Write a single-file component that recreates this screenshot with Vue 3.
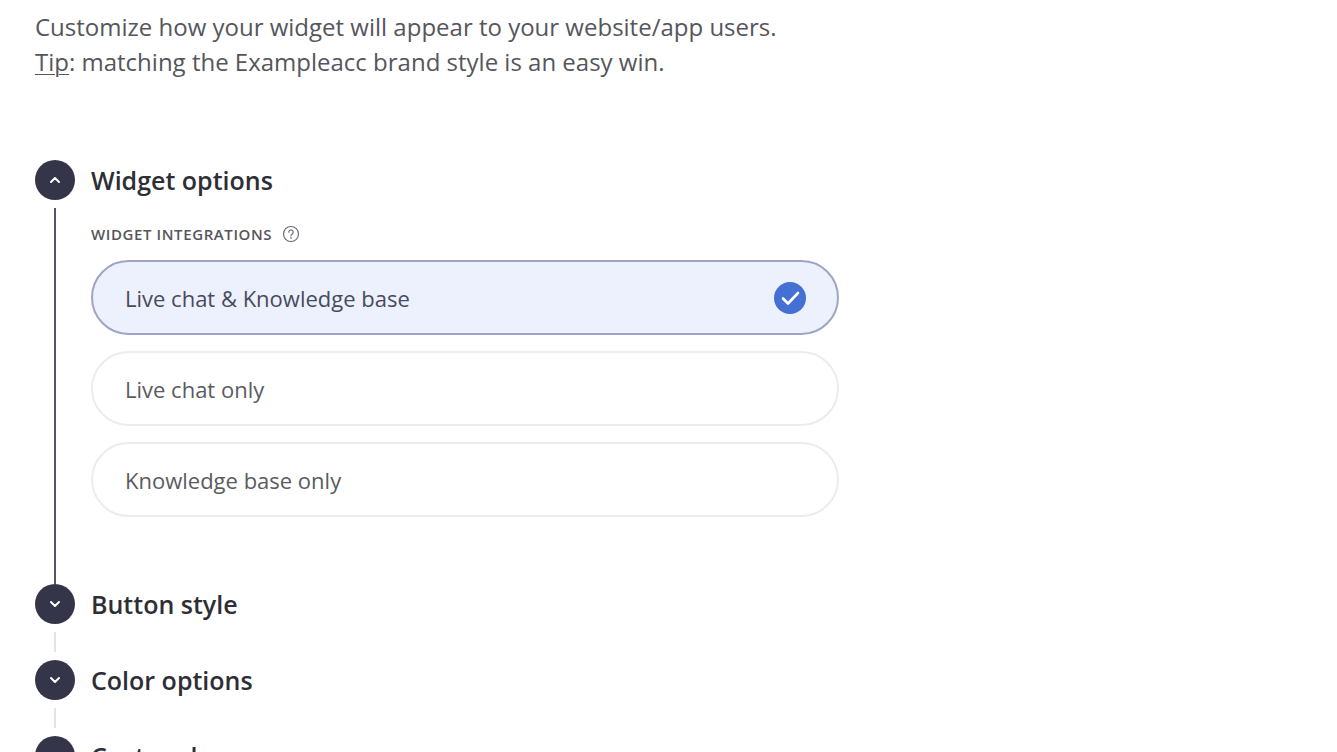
<script setup>
const options = [
  { label: 'Live chat & Knowledge base', selected: true },
  { label: 'Live chat only', selected: false },
  { label: 'Knowledge base only', selected: false },
]
const collapsed = ['Button style', 'Color options', 'Custom logo']
</script>

<template>
  <main class="page">
    <p class="intro">
      Customize how your widget will appear to your website/app users.<br />
      <span class="tip">Tip</span>: matching the Exampleacc brand style is an easy win.
    </p>

    <section class="steps">
      <div class="step-head">
        <span class="circle">
          <svg viewBox="0 0 16 16" class="chev"><path d="M4 10l4-4 4 4" /></svg>
        </span>
        <h2>Widget options</h2>
      </div>
      <div class="open-body">
        <div class="rail dark"></div>
        <div class="content">
          <div class="field-label">
            <span>Widget integrations</span>
            <svg viewBox="0 0 18 18" class="help">
              <circle cx="9" cy="9" r="7.5" />
              <path d="M6.8 7.2a2.2 2.2 0 1 1 3.4 1.8c-.8.5-1.2 1-1.2 1.8" />
              <path d="M9 12.4v.9" />
            </svg>
          </div>
          <div class="options">
            <div v-for="o in options" :key="o.label" class="option" :class="{ selected: o.selected }">
              <span>{{ o.label }}</span>
              <svg v-if="o.selected" viewBox="0 0 32 32" class="check">
                <circle cx="16" cy="16" r="16" />
                <path d="M9 16.5l5 5 10-10.5" />
              </svg>
            </div>
          </div>
        </div>
      </div>

      <template v-for="(name, i) in collapsed" :key="name">
        <div class="step-head">
          <span class="circle">
            <svg viewBox="0 0 16 16" class="chev"><path d="M4 6l4 4 4-4" /></svg>
          </span>
          <h2>{{ name }}</h2>
        </div>
        <div v-if="i < collapsed.length - 1" class="connector"><div class="rail light"></div></div>
      </template>
    </section>
  </main>
</template>

<style>
html, body { margin: 0; background: #fff; overflow: hidden; }
</style>

<style scoped>
.page {
  height: 752px;
  overflow: hidden;
  box-sizing: border-box;
  padding: 9px 0 0 35px;
  font-family: "Open Sans", "Liberation Sans", sans-serif;
  color: #4b4c52;
}
.intro {
  margin: 0;
  font-size: 24px;
  line-height: 35px;
  color: #55565c;
}
.tip { text-decoration: underline; text-underline-offset: 3px; text-decoration-thickness: 1px; }
.steps { margin-top: 81px; }
.step-head { display: flex; align-items: center; height: 40px; }
.circle {
  width: 40px;
  height: 40px;
  border-radius: 50%;
  background: #35354a;
  display: flex;
  align-items: center;
  justify-content: center;
  flex: none;
}
.chev { width: 16px; height: 16px; fill: none; stroke: #fff; stroke-width: 2; stroke-linecap: round; stroke-linejoin: round; }
h2 {
  margin: 0 0 0 16px;
  font-size: 25px;
  font-weight: 600;
  line-height: 36px;
  color: #2d2e36;
}
.open-body { display: flex; padding-top: 8px; height: 376px; }
.rail { width: 2px; margin-left: 19px; flex: none; }
.rail.dark { background: #55565f; }
.rail.light { background: #e4e4e7; height: 20px; }
.content { margin-left: 35px; width: 748px; }
.field-label {
  display: flex;
  align-items: center;
  gap: 10px;
  height: 20px;
  margin-top: 16px;
  font-size: 15px;
  font-weight: 600;
  letter-spacing: 0.6px;
  text-transform: uppercase;
  color: #55565c;
}
.help { width: 18px; height: 18px; fill: none; stroke: #6d6e75; stroke-width: 1.2; stroke-linecap: round; }
.options { display: flex; flex-direction: column; gap: 16px; margin-top: 16px; }
.option {
  box-sizing: border-box;
  height: 75px;
  border-radius: 38px;
  border: 2px solid #ececee;
  padding: 0 31px 0 32px;
  display: flex;
  align-items: center;
  justify-content: space-between;
  font-size: 22px;
  color: #5a5b61;
}
.option.selected {
  background: #edf1fd;
  border-color: #9ea4c4;
  color: #474b5e;
}
.check { width: 32px; height: 32px; }
.check circle { fill: #4470d4; }
.check path { fill: none; stroke: #fff; stroke-width: 2.6; stroke-linecap: round; stroke-linejoin: round; }
.connector { height: 36px; display: flex; align-items: center; }
</style>
